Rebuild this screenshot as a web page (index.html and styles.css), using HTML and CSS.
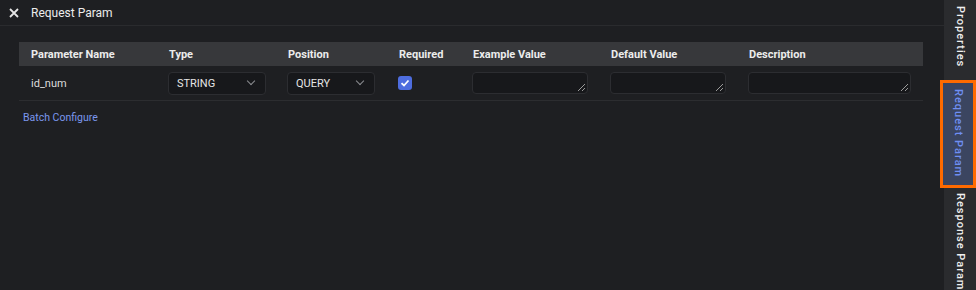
FILE: index.html
```html
<!DOCTYPE html>
<html lang="en">
<head>
    <meta charset="UTF-8">
    <title>Request Param</title>
    <link rel="stylesheet" href="styles.css">
</head>
<body>
    <div class="layout">
        <main class="painel">
            <div class="titulo">
                <span class="fechar">
                    <svg width="10" height="10" viewBox="0 0 10 10"><path d="M1 1L9 9M9 1L1 9" stroke="#e6e6e6" stroke-width="1.8"/></svg>
                </span>
                <span>Request Param</span>
            </div>
            <div class="conteudo">
                <table class="tabela">
                    <colgroup>
                        <col style="width: 138px">
                        <col style="width: 119px">
                        <col style="width: 111px">
                        <col style="width: 74px">
                        <col style="width: 138px">
                        <col style="width: 138px">
                        <col>
                    </colgroup>
                    <thead>
                        <tr>
                            <th>Parameter Name</th>
                            <th>Type</th>
                            <th>Position</th>
                            <th>Required</th>
                            <th>Example Value</th>
                            <th>Default Value</th>
                            <th>Description</th>
                        </tr>
                    </thead>
                    <tbody>
                        <tr>
                            <td>id_num</td>
                            <td><div class="select tipo">STRING<span class="seta"></span></div></td>
                            <td><div class="select posicao">QUERY<span class="seta"></span></div></td>
                            <td>
                                <span class="check">
                                    <svg width="10" height="8" viewBox="0 0 10 8"><path d="M1.5 4.2L4 6.5L8.5 1.5" fill="none" stroke="#fff" stroke-width="1.8"/></svg>
                                </span>
                            </td>
                            <td><div class="campo ex"></div></td>
                            <td><div class="campo ex"></div></td>
                            <td><div class="campo desc"></div></td>
                        </tr>
                    </tbody>
                </table>
                <a class="batch" href="#">Batch Configure</a>
            </div>
        </main>
        <aside class="lateral">
            <div class="aba aba-prop">Properties</div>
            <div class="aba aba-ativa">Request Param</div>
            <div class="aba aba-resp">Response Param</div>
        </aside>
    </div>
</body>
</html>
```

FILE: styles.css
```css
body {
    margin: 0;
    padding: 0;
    background-color: #1e1f22;
    color: #e2e2e2;
    font-family: Roboto, 'Liberation Sans', sans-serif;
    font-size: 11px;
}

.layout {
    display: flex;
    height: 290px;
    overflow: hidden;
}

.painel {
    flex: 1;
}

.titulo {
    display: flex;
    align-items: center;
    height: 26px;
    border-bottom: 1px solid #2a2b2e;
    padding-left: 9px;
    font-size: 12px;
    color: #ececec;
    box-sizing: border-box;
}

.fechar {
    display: flex;
    width: 10px;
    margin-right: 12px;
}

.conteudo {
    padding: 16px 21px 0 19px;
}

.tabela {
    width: 100%;
    border-collapse: collapse;
    table-layout: fixed;
}

.tabela th {
    background-color: #37383b;
    height: 24px;
    text-align: left;
    font-weight: 700;
    color: #ececec;
    padding: 0 0 0 12px;
}

.tabela td {
    height: 34px;
    padding: 0 0 0 11px;
    border-bottom: 1px solid #2c2d30;
    color: #dcdcdc;
}

.tabela td:first-child {
    padding-left: 12px;
}

.select {
    display: flex;
    align-items: center;
    justify-content: space-between;
    height: 23px;
    background-color: #17181b;
    border: 1px solid #2c2d31;
    border-radius: 4px;
    padding: 0 11px 0 8px;
    box-sizing: border-box;
    color: #e6e6e6;
}

.tipo {
    width: 98px;
}

.posicao {
    width: 88px;
}

.seta {
    width: 5px;
    height: 5px;
    border-right: 1.5px solid #8a8c90;
    border-bottom: 1.5px solid #8a8c90;
    transform: rotate(45deg);
    margin-top: -4px;
}

.check {
    display: flex;
    align-items: center;
    justify-content: center;
    width: 14px;
    height: 14px;
    border-radius: 3px;
    background-color: #4e6ddf;
}

.campo {
    position: relative;
    height: 22px;
    background-color: #17181b;
    border: 1px solid #2c2d31;
    border-radius: 4px;
    box-sizing: border-box;
}

.campo::after {
    content: '';
    position: absolute;
    right: 2px;
    bottom: 2px;
    width: 7px;
    height: 7px;
    background: linear-gradient(135deg, transparent 45%, #9a9a9a 45%, #9a9a9a 55%, transparent 55%, transparent 72%, #9a9a9a 72%, #9a9a9a 82%, transparent 82%);
}

.ex {
    width: 116px;
}

.desc {
    width: 163px;
}

.batch {
    display: inline-block;
    margin: 10px 0 0 4px;
    color: #7b97ee;
    text-decoration: none;
    font-size: 10.5px;
}

.lateral {
    width: 32px;
    background-color: #2a2b2e;
    display: flex;
    flex-direction: column;
    align-items: center;
}

.aba {
    writing-mode: vertical-rl;
    white-space: nowrap;
    letter-spacing: 1px;
    font-size: 11px;
    font-weight: 500;
    color: #f0f0f0;
    width: 32px;
    display: flex;
    align-items: center;
    box-sizing: border-box;
}

.aba-prop {
    height: 80px;
    padding-top: 6px;
}

.aba-ativa {
    width: 36px;
    margin-left: -4px;
    height: 108px;
    padding-top: 6px;
    border: 3px solid #ff6a00;
    background-color: #3b4560;
    color: #6f8ff3;
}

.aba-resp {
    padding-top: 5px;
}
```
